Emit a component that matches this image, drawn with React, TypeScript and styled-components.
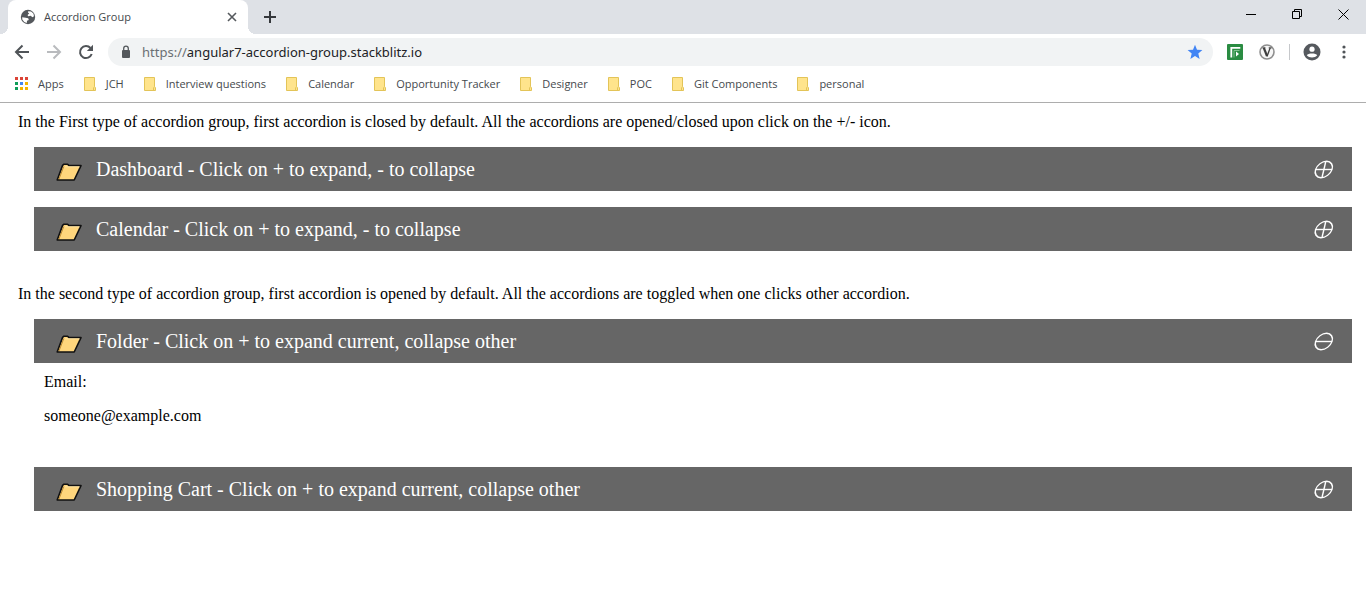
import React, { useState } from "react";
import styled, { createGlobalStyle } from "styled-components";

const GlobalStyle = createGlobalStyle`
  * { box-sizing: border-box; }
  body { margin: 0; background: #fff; color: #000; font: 16px/18px "Liberation Serif", "Times New Roman", serif; }
  button { margin: 0; padding: 0; border: 0; background: none; color: inherit; font: inherit; cursor: pointer; }
  svg { display: block; flex: none; }
  p { margin: 0; }
`;

const Browser = styled.header`
  font: 11px/16px "Open Sans", "Segoe UI", sans-serif;
  border-bottom: 1px solid #adadad;
`;

const TabStrip = styled.div`
  display: flex;
  justify-content: space-between;
  height: 34px;
  padding-left: 8px;
  background: #dee1e6;
`;

const Tabs = styled.div`
  display: flex;
`;

const Tab = styled.div`
  position: relative;
  display: flex;
  align-items: center;
  width: 240px;
  padding: 0 10px 0 12px;
  border-radius: 8px 8px 0 0;
  background: #fff;
  color: #45494d;

  &::before,
  &::after {
    content: "";
    position: absolute;
    bottom: 0;
    width: 8px;
    height: 8px;
  }
  &::before {
    right: 100%;
    background: radial-gradient(circle at 0 0, #dee1e6 8px, #fff 8px);
  }
  &::after {
    left: 100%;
    background: radial-gradient(circle at 100% 0, #dee1e6 8px, #fff 8px);
  }
`;

const TabTitle = styled.span`
  flex: 1;
  padding-left: 8px;
`;

const IconButton = styled.button<{ $width: number }>`
  display: flex;
  align-items: center;
  justify-content: center;
  width: ${(p) => p.$width}px;
`;

const WindowControls = styled.div`
  display: flex;
  height: 28px;
`;

const Toolbar = styled.div`
  display: flex;
  align-items: center;
  height: 36px;
  padding: 0 6px;
`;

const AddressBar = styled.label`
  display: flex;
  flex: 1;
  align-items: center;
  height: 28px;
  margin: 0 6px;
  padding: 0 10px 0 12px;
  border-radius: 14px;
  background: #f1f3f4;
  font-family: "Noto Sans", "Segoe UI", sans-serif;
  font-size: 13px;
`;

const Scheme = styled.span`
  padding-left: 10px;
  color: #6b6f73;
`;

const AddressInput = styled.input`
  flex: 1;
  min-width: 0;
  padding: 0;
  border: 0;
  outline: 0;
  background: none;
  color: #202124;
  font: inherit;
`;

const Divider = styled.span`
  width: 1px;
  height: 16px;
  margin: 0 6px;
  background: #c6c8cb;
`;

const Bookmarks = styled.nav`
  display: flex;
  align-items: center;
  gap: 20px;
  height: 32px;
  padding: 0 14px 4px;
`;

const Bookmark = styled.a`
  display: flex;
  align-items: center;
  gap: 10px;
  color: #45494d;
  text-decoration: none;
  white-space: nowrap;
`;

const Page = styled.main`
  padding: 10px 14px 10px 18px;
`;

const Group = styled.section`
  display: flex;
  flex-direction: column;
  gap: 16px;
  margin-bottom: 34px;
`;

const Item = styled.article`
  margin-left: 16px;
`;

const ItemHeader = styled.div`
  display: flex;
  align-items: center;
  height: 44px;
  padding: 0 12px 0 22px;
  background: #666;
  color: #fff;
`;

const ItemTitle = styled.h2`
  flex: 1;
  margin: 0;
  padding-left: 14px;
  font-size: 20px;
  line-height: 24px;
  font-weight: 400;
`;

const Panel = styled.div`
  display: flex;
  flex-direction: column;
  gap: 16px;
  padding: 10px 10px 26px;
`;

const FolderIcon = () => (
  <svg width="26" height="28" viewBox="0 0 26 28" aria-hidden="true">
    <path d="M1.2 25 6.6 10.400 8 9.200h3.600l1.400 1.400h12L18.200 25Z" fill="#ffd67c" stroke="#111" strokeWidth="1.6" strokeLinejoin="round" />
    <path d="M7.800 11.500 3 24" stroke="#bd8b35" />
    <path d="M9 11.800h14.500" stroke="#ffe5a6" />
  </svg>
);

const ToggleIcon = ({ open }: { open: boolean }) => (
  <svg width="22" height="22" viewBox="0 0 22 22" fill="none" stroke="#fff" strokeWidth="1.4" aria-hidden="true">
    <ellipse cx="11" cy="11.5" rx="8.2" ry="8.2" transform="matrix(1 0 -.33 1 3.6 0)" />
    <path d="M2.500 11.500h16.500" />
    {!open && <path d="M12.800 3.500 9 19.500" />}
  </svg>
);

const BookmarkFolder = () => (
  <svg width="12" height="14" viewBox="0 0 12 14" aria-hidden="true">
    <path d="M.5.5h10v9.2l1 1v2.8H.5Z" fill="#ffe48c" stroke="#e3c458" />
    <path d="M9.5 13.5v-2.6l1-1.2" fill="none" stroke="#e3c458" />
  </svg>
);

const dotColors = ["#db4437", "#db4437", "#db4437", "#0f9d58", "#4285f4", "#f4b400", "#0f9d58", "#f4b400", "#f4b400"];

const AppsIcon = () => (
  <svg width="14" height="14" viewBox="0 0 14 14" aria-hidden="true">
    {dotColors.map((c, i) => (
      <rect key={i} x={1 + (i % 3) * 5} y={Math.floor(i / 3) * 5} width="3" height="3" fill={c} />
    ))}
  </svg>
);

const bookmarks = ["JCH", "Interview questions", "Calendar", "Opportunity Tracker", "Designer", "POC", "Git Components", "personal"];

const BrowserBar = () => (
  <Browser>
    <TabStrip>
      <Tabs>
        <Tab>
          <svg width="16" height="16" viewBox="0 0 16 16" aria-hidden="true">
            <circle cx="8" cy="8" r="7.2" fill="#54585c" />
            <path d="M2.2 8.2 5.8 8.7 8.2 9.3 8.8 11 7 11.8 6.8 14 4.3 13.1 2.3 10.5ZM8.2 2.2 11 2.4 13.4 4.4 14 7.2 12.4 8.2 10.7 6.7 8.1 7.3 7.6 5.9 9.2 4.6 8 3.6Z" fill="#fff" />
          </svg>
          <TabTitle>Accordion Group</TabTitle>
          <IconButton $width={12} aria-label="Close tab">
            <svg width="12" height="12" viewBox="0 0 12 12" stroke="#55595d" strokeWidth="1.6"><path d="m2 2 8 8M10 2 2 10" /></svg>
          </IconButton>
        </Tab>
        <IconButton $width={44} aria-label="New tab">
          <svg width="14" height="14" viewBox="0 0 14 14" stroke="#35383c" strokeWidth="2"><path d="M7 1v12M1 7h12" /></svg>
        </IconButton>
      </Tabs>
      <WindowControls>
        <IconButton $width={46} aria-label="Minimize">
          <svg width="10" height="10" viewBox="0 0 10 10"><path d="M0 5h10v1H0Z" /></svg>
        </IconButton>
        <IconButton $width={46} aria-label="Restore">
          <svg width="10" height="10" viewBox="0 0 10 10" fill="none" stroke="#000"><path d="M.5 2.5h7v7h-7ZM2.5 2.5v-2h7v7h-2" /></svg>
        </IconButton>
        <IconButton $width={46} aria-label="Close">
          <svg width="11" height="11" viewBox="0 0 11 11" stroke="#000"><path d="m.5.5 10 10M10.5.5l-10 10" /></svg>
        </IconButton>
      </WindowControls>
    </TabStrip>
    <Toolbar>
      <IconButton $width={32} aria-label="Back">
        <svg width="16" height="16" viewBox="0 0 16 16" fill="none" stroke="#505458" strokeWidth="2"><path d="M15 8H2.5M8.5 1.5 2 8l6.5 6.5" /></svg>
      </IconButton>
      <IconButton $width={32} aria-label="Forward">
        <svg width="16" height="16" viewBox="0 0 16 16" fill="none" stroke="#b9bbbe" strokeWidth="2"><path d="M1 8h12.5M7.5 1.5 14 8l-6.5 6.5" /></svg>
      </IconButton>
      <IconButton $width={32} aria-label="Reload">
        <svg width="16" height="16" viewBox="0 0 16 16" fill="none" stroke="#505458" strokeWidth="2">
          <path d="M13.7 10A6 6 0 1 1 12.5 4" />
          <path d="M15 .8V7H8.8Z" fill="#505458" stroke="none" />
        </svg>
      </IconButton>
      <AddressBar>
        <svg width="12" height="14" viewBox="0 0 12 14" aria-hidden="true">
          <rect x="2" y="5" width="8" height="8" rx="1" fill="#54585c" />
          <path d="M3.7 5.5V3.5a2.300 2.300 0 0 1 4.600 0v2" fill="none" stroke="#54585c" strokeWidth="1.300" />
        </svg>
        <Scheme>https://</Scheme>
        <AddressInput aria-label="Address" defaultValue="angular7-accordion-group.stackblitz.io" />
        <IconButton type="button" $width={16} aria-label="Bookmark this page">
          <svg width="16" height="16" viewBox="0 0 16 16"><path d="m8 .7 2 5 5.400.4-4.100 3.500 1.300 5.300L8 12l-4.600 2.900 1.300-5.300L.6 6.100 6 5.700Z" fill="#4285f4" /></svg>
        </IconButton>
      </AddressBar>
      <IconButton $width={32} aria-label="Recorder extension">
        <svg width="16" height="16" viewBox="0 0 16 16" fill="none">
          <rect width="16" height="16" rx="1" fill="#2a8c42" />
          <path d="M4.300 13.500V3.800h9" stroke="#fff" strokeWidth="1.800" />
          <path d="M7 13.500V6.500h5.500" stroke="#7fc08c" />
          <path d="m9 7.500 3 2.500L9 12.500Z" fill="#fff" />
        </svg>
      </IconButton>
      <IconButton $width={32} aria-label="Validator extension">
        <svg width="16" height="16" viewBox="0 0 16 16" fill="none">
          <circle cx="8" cy="8" r="7" fill="#f7f7f7" stroke="#8f8f8f" strokeWidth="1.600" />
          <path d="m4.800 3.800 3.200 8.200" stroke="#3e3e3e" strokeWidth="2.200" />
          <path d="m8 12.500 3.200-8.700" stroke="#3e3e3e" strokeWidth="1.300" />
          <path d="M3.500 3.900h3M9.700 3.900h3" stroke="#3e3e3e" />
        </svg>
      </IconButton>
      <Divider />
      <IconButton $width={32} aria-label="Profile">
        <svg width="18" height="18" viewBox="0 0 18 18">
          <circle cx="9" cy="9" r="8.5" fill="#55595e" />
          <circle cx="9" cy="6.2" r="2.6" fill="#fff" />
          <path d="M3.8 12.3C4.8 9.8 13.2 9.8 14.2 12.3 12 15.2 6 15.2 3.8 12.3Z" fill="#fff" />
        </svg>
      </IconButton>
      <IconButton $width={32} aria-label="Menu">
        <svg width="4" height="14" viewBox="0 0 4 14" fill="#505458"><circle cx="2" cy="2" r="1.6" /><circle cx="2" cy="7" r="1.6" /><circle cx="2" cy="12" r="1.6" /></svg>
      </IconButton>
    </Toolbar>
    <Bookmarks aria-label="Bookmarks">
      <Bookmark href="#apps"><AppsIcon />Apps</Bookmark>
      {bookmarks.map((name) => (
        <Bookmark key={name} href="#bookmark"><BookmarkFolder />{name}</Bookmark>
      ))}
    </Bookmarks>
  </Browser>
);

interface AccordionProps {
  title: string;
  open: boolean;
  onToggle: () => void;
  children?: React.ReactNode;
}

const Accordion = ({ title, open, onToggle, children }: AccordionProps) => (
  <Item>
    <ItemHeader>
      <FolderIcon />
      <ItemTitle>{title}</ItemTitle>
      <IconButton $width={32} aria-label={title} aria-expanded={open} onClick={onToggle}>
        <ToggleIcon open={open} />
      </IconButton>
    </ItemHeader>
    {open && <Panel>{children}</Panel>}
  </Item>
);

const Email = () => (
  <>
    <p>Email:</p>
    <p>someone@example.com</p>
  </>
);

const independent = ["Dashboard - Click on + to expand, - to collapse", "Calendar - Click on + to expand, - to collapse"];
const exclusive = ["Folder - Click on + to expand current, collapse other", "Shopping Cart - Click on + to expand current, collapse other"];

export default function App() {
  const [opened, setOpened] = useState([false, false]);
  const [current, setCurrent] = useState(0);

  return (
    <>
      <GlobalStyle />
      <BrowserBar />
      <Page>
        <Group>
          <p>In the First type of accordion group, first accordion is closed by default. All the accordions are opened/closed upon click on the +/- icon.</p>
          {independent.map((title, i) => (
            <Accordion key={title} title={title} open={opened[i]} onToggle={() => setOpened(opened.map((o, n) => (n === i ? !o : o)))}>
              <Email />
            </Accordion>
          ))}
        </Group>
        <Group>
          <p>In the second type of accordion group, first accordion is opened by default. All the accordions are toggled when one clicks other accordion.</p>
          {exclusive.map((title, i) => (
            <Accordion key={title} title={title} open={current === i} onToggle={() => setCurrent(current === i ? -1 : i)}>
              <Email />
            </Accordion>
          ))}
        </Group>
      </Page>
    </>
  );
}
